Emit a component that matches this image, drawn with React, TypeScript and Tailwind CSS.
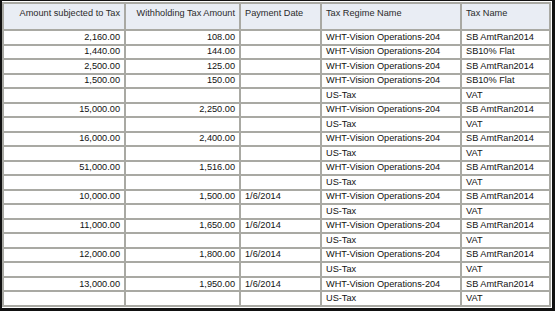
import React from 'react';

type Row = [string, string, string, string, string];

const rows: Row[] = [
  ['2,160.00', '108.00', '', 'WHT-Vision Operations-204', 'SB AmtRan2014'],
  ['1,440.00', '144.00', '', 'WHT-Vision Operations-204', 'SB10% Flat'],
  ['2,500.00', '125.00', '', 'WHT-Vision Operations-204', 'SB AmtRan2014'],
  ['1,500.00', '150.00', '', 'WHT-Vision Operations-204', 'SB10% Flat'],
  ['', '', '', 'US-Tax', 'VAT'],
  ['15,000.00', '2,250.00', '', 'WHT-Vision Operations-204', 'SB AmtRan2014'],
  ['', '', '', 'US-Tax', 'VAT'],
  ['16,000.00', '2,400.00', '', 'WHT-Vision Operations-204', 'SB AmtRan2014'],
  ['', '', '', 'US-Tax', 'VAT'],
  ['51,000.00', '1,516.00', '', 'WHT-Vision Operations-204', 'SB AmtRan2014'],
  ['', '', '', 'US-Tax', 'VAT'],
  ['10,000.00', '1,500.00', '1/6/2014', 'WHT-Vision Operations-204', 'SB AmtRan2014'],
  ['', '', '', 'US-Tax', 'VAT'],
  ['11,000.00', '1,650.00', '1/6/2014', 'WHT-Vision Operations-204', 'SB AmtRan2014'],
  ['', '', '', 'US-Tax', 'VAT'],
  ['12,000.00', '1,800.00', '1/6/2014', 'WHT-Vision Operations-204', 'SB AmtRan2014'],
  ['', '', '', 'US-Tax', 'VAT'],
  ['13,000.00', '1,950.00', '1/6/2014', 'WHT-Vision Operations-204', 'SB AmtRan2014'],
  ['', '', '', 'US-Tax', 'VAT'],
];

const cell = 'border-2 border-[#a9a9a3] px-[4px] py-0 leading-[11px] whitespace-nowrap';

const App = () => {
  return (
    <div className="w-[555px] h-[311px] bg-white overflow-hidden">
      <div className="w-[555px] h-[311px] border-t border-l-2 border-r-[3px] border-b-[3px] border-[#111] pt-[1px] bg-white">
        <table
          className="border-collapse table-fixed w-[547px] h-[305px] text-[9.2px] text-[#111]"
          style={{ fontFamily: '"Liberation Sans", Arial, sans-serif' }}
        >
          <colgroup>
            <col className="w-[122px]" />
            <col className="w-[115px]" />
            <col className="w-[81px]" />
            <col className="w-[140px]" />
            <col className="w-[89px]" />
          </colgroup>
          <thead>
            <tr className="h-[27px] bg-[#e9edf4] text-[#2a2a2a]">
              <th className={`${cell} text-right font-normal align-top pt-[4px]`}>Amount subjected to Tax</th>
              <th className={`${cell} text-right font-normal align-top pt-[4px]`}>Withholding Tax Amount</th>
              <th className={`${cell} text-left font-normal align-top pt-[4px]`}>Payment Date</th>
              <th className={`${cell} text-left font-normal align-top pt-[4px]`}>Tax Regime Name</th>
              <th className={`${cell} text-left font-normal align-top pt-[4px]`}>Tax Name</th>
            </tr>
          </thead>
          <tbody>
            {rows.map((r, i) => (
              <tr key={i} className="h-[14px]">
                <td className={`${cell} text-right`}>{r[0]}</td>
                <td className={`${cell} text-right`}>{r[1]}</td>
                <td className={`${cell} text-left`}>{r[2]}</td>
                <td className={`${cell} text-left`}>{r[3]}</td>
                <td className={`${cell} text-left`}>{r[4]}</td>
              </tr>
            ))}
          </tbody>
        </table>
      </div>
    </div>
  );
};

export default App;
